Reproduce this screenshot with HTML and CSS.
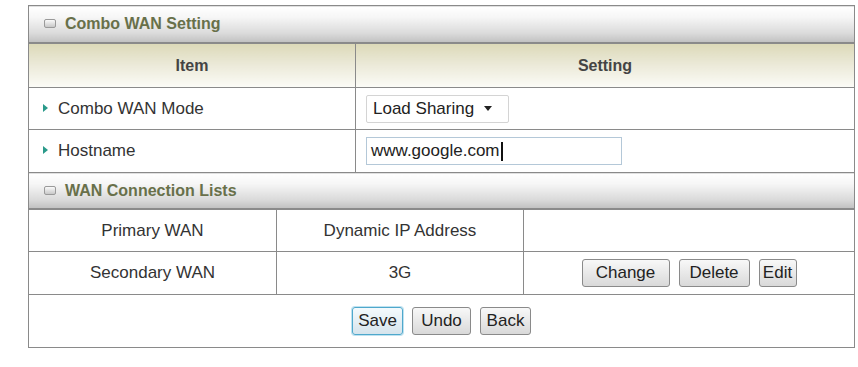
FILE: index.html
```html
<!DOCTYPE html>
<html>
<head>
<meta charset="utf-8">
<link rel="stylesheet" href="styles.css">
</head>
<body>
<div class="wrap">
<table class="cfg">
  <colgroup><col class="c1"><col></colgroup>
  <tr class="title t1"><td colspan="2"><span class="ico"></span>Combo WAN Setting</td></tr>
  <tr class="head"><th>Item</th><th>Setting</th></tr>
  <tr class="row"><td class="lbl"><span class="tri"></span>Combo WAN Mode</td>
    <td class="val"><div class="sel">Load Sharing<span class="arr"></span></div></td></tr>
  <tr class="row r2"><td class="lbl"><span class="tri"></span>Hostname</td>
    <td class="val"><div class="inp">www.google.com<span class="caret"></span></div></td></tr>
  <tr class="title t2"><td colspan="2"><span class="ico"></span>WAN Connection Lists</td></tr>
</table>
<table class="cfg list">
  <colgroup><col class="a"><col class="b"><col></colgroup>
  <tr class="lrow l1"><td>Primary WAN</td><td>Dynamic IP Address</td><td></td></tr>
  <tr class="lrow"><td>Secondary WAN</td><td>3G</td>
    <td><div class="btns"><span class="btn w-change">Change</span><span class="btn w-delete">Delete</span><span class="btn w-edit">Edit</span></div></td></tr>
  <tr class="foot"><td colspan="3"><div class="btns"><span class="btn save w-save">Save</span><span class="btn w-undo">Undo</span><span class="btn w-back">Back</span></div></td></tr>
</table>
</div>
</body>
</html>
```
FILE: styles.css
```css
html, body { margin: 0; padding: 0; background: #fff; }
body { font-family: "Liberation Sans", Arial, sans-serif; font-size: 17px; color: #333; }
.wrap { padding: 5px 0 0 28px; }
.cfg { border-collapse: collapse; width: 827px; table-layout: fixed; }
.cfg td, .cfg th { border: 1px solid #8a8a8a; padding: 0; }
.c1 { width: 327px; }
.title td {
  height: 35px;
  background: linear-gradient(#ffffff 0%, #f6f6f6 30%, #dadada 75%, #c0c0c0 100%);
  color: #68704a; font-weight: bold; font-size: 16px; padding-left: 15px;
  border-bottom: 2px solid #8a8a8a;
}
.t1 td { height: 36px; }
.ico { display: inline-block; width: 10px; height: 7px; border: 1px solid #9a9a9a; border-radius: 2px; background: linear-gradient(#fafafa, #c8c8c8); margin-right: 9px; vertical-align: 1px; }
.head th {
  height: 43px; font-weight: bold; font-size: 16px; color: #444;
  background: linear-gradient(#dcd9b8 0%, #eae8d6 45%, #fbfbf6 100%);
}
.row td { height: 41px; }
.r2 td { height: 42px; }
.lbl { padding-left: 14px !important; }
.tri { display: inline-block; width: 0; height: 0; border-left: 5px solid #2a9a8a; border-top: 4px solid transparent; border-bottom: 4px solid transparent; margin-right: 10px; vertical-align: 2px; }
.val { padding-left: 10px !important; }
.sel { display: inline-flex; align-items: center; height: 28px; width: 143px; box-sizing: border-box; border: 1px solid #d4d4d4; border-radius: 2px; padding-left: 6px; color: #222; background: #fff; }
.arr { display: inline-block; width: 0; height: 0; border-top: 5px solid #222; border-left: 4px solid transparent; border-right: 4px solid transparent; margin-left: 10px; }
.inp { display: flex; align-items: center; height: 28px; width: 256px; box-sizing: border-box; border: 1px solid #b4c8d8; padding-left: 4px; color: #222; }
.caret { display: inline-block; width: 2px; height: 19px; background: #111; margin-left: 1px; }
.t2 td { height: 35px; }
.list td { border-top: none; }
.a { width: 248px; }
.b { width: 247px; }
.lrow td { height: 42px; text-align: center; }
.l1 td { height: 41px; }
.btns { display: flex; justify-content: center; gap: 9px; }
.btn {
  display: inline-flex; align-items: center; justify-content: center;
  height: 28px; box-sizing: border-box;
  border: 1px solid #8a8a8a; border-radius: 3px;
  background: linear-gradient(#f8f8f8, #d9d9d9);
  font-size: 17px; color: #222;
}
.w-change { width: 88px; }
.w-delete { width: 71px; }
.w-edit { width: 38px; }
.w-save { width: 51px; }
.w-undo { width: 59px; }
.w-back { width: 51px; }
.save { border-color: #4fa8cc; box-shadow: 0 0 0 1px #bfe2f0; background: linear-gradient(#f4fafd, #d6e4ec); }
.foot td { height: 52px; }
```
